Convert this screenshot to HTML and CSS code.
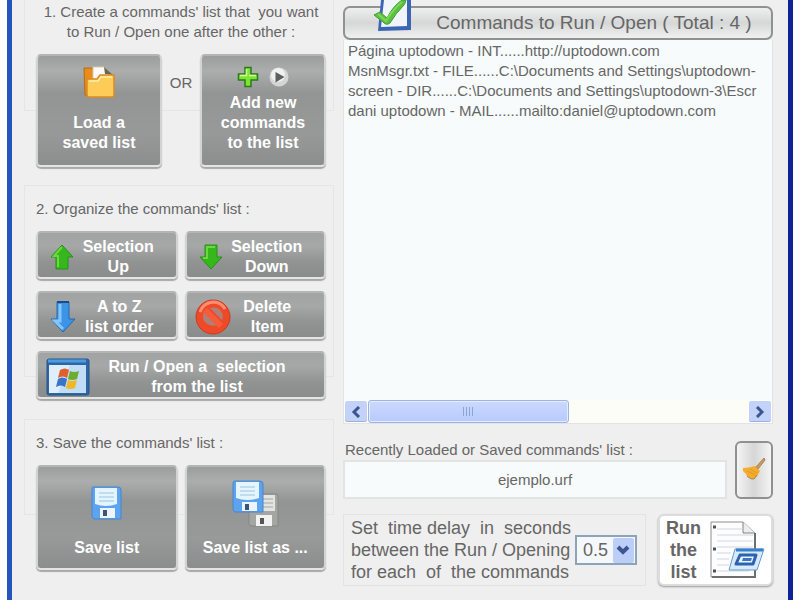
FILE: index.html
```html
<!DOCTYPE html>
<html lang="en">
<head>
  <meta charset="UTF-8">
  <meta name="viewport" content="width=device-width, initial-scale=1.0">
  <title>Commands to Run / Open</title>
  <link rel="stylesheet" href="styles.css">
</head>
<body>
  <div class="window">
    <div class="steps">
      <section class="group group-create">
        <p class="two-lines">1. Create a commands' list that&nbsp; you want<br>to Run / Open one after the other :</p>
        <div class="create-row">
          <button class="btn btn-load" type="button">
            <svg width="34" height="32" viewBox="0 0 34 32">
              <path d="M2 2h8l2 3v24H3z" fill="#e88c1c" stroke="#b86a10"/>
              <path d="M11 1h11l8 8v14H11z" fill="#fafafa" stroke="#d8c8a8"/>
              <path d="M22 1l1 7 8 1z" fill="#6c6552"/>
              <path d="M5 13h10l3-4h14v20q0 2-2 2H7q-2 0-2-2z" fill="#fdcb58" stroke="#dc8a1e" stroke-width="1.5"/>
              <path d="M7 15h9l3-4h11" fill="none" stroke="#fff0a8" stroke-width="1.5"/>
            </svg>
            <span>Load a<br>saved list</span>
          </button>
          <span class="or">OR</span>
          <button class="btn btn-add" type="button">
            <span class="icon-pair">
              <svg width="22" height="22" viewBox="0 0 22 22">
                <path d="M8 1.500h6v6.500h6.500v6H14v6.500H8V14H1.500V8H8z" fill="#7ce432" stroke="#2b7a1c" stroke-width="1.500"/>
                <path d="M9.500 3v6.500H3M12 9.500h7" fill="none" stroke="#d6ff9c" stroke-width="1.500"/>
              </svg>
              <svg width="20" height="20" viewBox="0 0 20 20">
                <circle cx="10" cy="10" r="9.500" fill="#d4d6d6"/>
                <circle cx="9" cy="8" r="7" fill="#f0f1f1"/>
                <path d="M6.500 5l9 5-9 5.500z" fill="#5c6060"/>
              </svg>
            </span>
            <span>Add new<br>commands<br>to the list</span>
          </button>
        </div>
      </section>

      <section class="group group-organize">
        <p>2. Organize the commands' list :</p>
        <div class="organize-grid">
          <button class="btn btn-row" type="button">
            <svg width="24" height="26" viewBox="0 0 24 26">
              <path d="M12 1l11 12h-5v12H6V13H1z" fill="#36b81c" stroke="#288f1c"/>
              <path d="M12 3L4 12h4v11" fill="none" stroke="#6cd840" stroke-width="2"/>
            </svg>
            <span>Selection<br>Up</span>
          </button>
          <button class="btn btn-row" type="button">
            <svg width="24" height="26" viewBox="0 0 24 26">
              <path d="M12 25L1 13h5V1h12v12h5z" fill="#36b81c" stroke="#288f1c"/>
              <path d="M16 3H8v11H4" fill="none" stroke="#6cd840" stroke-width="2"/>
            </svg>
            <span>Selection<br>Down</span>
          </button>
          <button class="btn btn-row" type="button">
            <svg width="26" height="34" viewBox="0 0 26 34">
              <path d="M13 32L1 19h6V2h12v17h6z" fill="#3c94e6" stroke="#2368b4"/>
              <path d="M10 4v17H5l8 8" fill="none" stroke="#84c6fa" stroke-width="3"/>
              <path d="M7 2h12" stroke="#1a4a8c" stroke-width="2"/>
            </svg>
            <span>A to Z<br>list order</span>
          </button>
          <button class="btn btn-row btn-delete" type="button">
            <svg width="36" height="36" viewBox="0 0 36 36">
              <circle cx="18" cy="18" r="17" fill="#ee4a28" stroke="#c83c20"/>
              <path d="M5 13Q8 4 18 3q8 0 12 7" fill="none" stroke="#ff8c70" stroke-width="3"/>
              <path d="M15 9q7-2 11 3 3 5 1 9zM9 13q-3 7 2 11 5 4 11 2z" fill="#b08078"/>
              <path d="M10 11l16 16" stroke="#f45c3c" stroke-width="6"/>
            </svg>
            <span>Delete<br>Item</span>
          </button>
          <button class="btn btn-row btn-run-selection" type="button">
            <svg width="44" height="38" viewBox="0 0 44 38">
              <rect x="1" y="1" width="42" height="36" rx="2" fill="#2c66a8" stroke="#255488"/>
              <path d="M2 3h38" stroke="#4c9ce0" stroke-width="3"/>
              <path d="M3 7h37v28H3z" fill="#e0edfa"/>
              <path d="M24 7h16v28H12z" fill="#c3dcf5"/>
              <path d="M14 12q5-3 9 0l-2 8q-4-3-9 0z" fill="#e0602c"/>
              <path d="M24 13q4 2 9 0l-2 8q-5 2-9 0z" fill="#6cac30"/>
              <path d="M12 21q4-3 9 0l-2 8q-4-3-9 0z" fill="#3874cc"/>
              <path d="M22 22q4 2 9 0l-2 8q-5 2-9 0z" fill="#f0b824"/>
            </svg>
            <span>Run / Open a&nbsp; selection<br>from the list</span>
          </button>
        </div>
      </section>

      <section class="group group-save">
        <p>3. Save the commands' list :</p>
        <div class="save-row">
          <button class="btn btn-save" type="button">
            <svg width="54" height="52" viewBox="0 0 54 52">
              <path d="M13 10h25q3 0 3 3v29H14l-2-2V12q0-2 1-2z" fill="#5ca4f0" stroke="#4884cc"/>
              <path d="M15 11h22v16q-11 4-22 0z" fill="#e4f5ff"/>
              <path d="M19 16h15M19 20h15M19 24h15" stroke="#9cc4e0"/>
              <path d="M20 31h15v10H20z" fill="#edf4ff"/>
              <path d="M23 33h4v6h-4z" fill="#3c5478"/>
            </svg>
            <span>Save list</span>
          </button>
          <button class="btn btn-save" type="button">
            <svg width="54" height="52" viewBox="0 0 54 52">
              <path d="M22 17h26q2 0 2 2v30H23l-2-2V18z" fill="#a4a6a4" stroke="#858785"/>
              <path d="M25 18h22v16H25z" fill="#e2e4e2"/>
              <path d="M34 22h11M34 26h11M34 30h11" stroke="#a4a6a4"/>
              <path d="M28 38h16v11H28z" fill="#f2f2f0"/>
              <path d="M32 41h4v6h-4z" fill="#555"/>
              <path d="M6 4h26q3 0 3 3v28H7l-2-2V6z" fill="#5ca4f0" stroke="#4884cc"/>
              <path d="M8 5h23v16q-12 4-23 0z" fill="#e4f5ff"/>
              <path d="M12 10h15M12 14h15M12 18h15" stroke="#9cc4e0"/>
              <path d="M14 25h15v9H14z" fill="#edf4ff"/>
              <path d="M17 27h4v6h-4z" fill="#3c5478"/>
            </svg>
            <span>Save list as ...</span>
          </button>
        </div>
      </section>
    </div>

    <div class="commands">
      <h1 class="commands-title">
        <svg class="title-icon" width="42" height="34" viewBox="0 0 42 34">
          <path d="M8 0L5 31l33-1V0z" fill="#3c66b4"/>
          <path d="M11 0L8 27l26-1V0z" fill="#f1f4fb"/>
          <path d="M1 15l6-3 7 6Q20 6 29 0h4q-1 4-2 5Q23 13 17 23q-4 3-7-1z" fill="#5cc040" stroke="#429c34"/>
          <path d="M5 14l8 7Q20 9 29 2" fill="none" stroke="#7cd858" stroke-width="2"/>
        </svg>
        <label for="commands-list">Commands to Run / Open ( Total : 4 )</label>
      </h1>
      <div class="list-box">
        <select class="list" id="commands-list" multiple size="6">
          <option>Página uptodown - INT......http://uptodown.com</option>
          <option>MsnMsgr.txt - FILE......C:\Documents and Settings\uptodown-</option>
          <option>screen - DIR......C:\Documents and Settings\uptodown-3\Escr</option>
          <option>dani uptodown - MAIL......mailto:daniel@uptodown.com</option>
        </select>
        <div class="scrollbar">
          <button class="scroll-btn" type="button" aria-label="Scroll left">
            <svg width="12" height="12" viewBox="0 0 12 12"><path d="M9 1L4 6l5 5" fill="none" stroke="#3c5490" stroke-width="3"/></svg>
          </button>
          <div class="track">
            <div class="thumb"><span class="grip"></span></div>
          </div>
          <button class="scroll-btn" type="button" aria-label="Scroll right">
            <svg width="12" height="12" viewBox="0 0 12 12"><path d="M3 1l5 5-5 5" fill="none" stroke="#3c5490" stroke-width="3"/></svg>
          </button>
        </div>
      </div>

      <div class="recent">
        <div class="recent-file">
          <label for="recent-name">Recently Loaded or Saved commands' list :</label>
          <input class="recent-name" type="text" id="recent-name" value="ejemplo.urf">
        </div>
        <button class="clear-btn" type="button" aria-label="Clear">
          <svg width="26" height="26" viewBox="0 0 26 26">
            <path d="M15 10L23 1l1 2-7 9z" fill="#c89c58" stroke="#a88458"/>
            <path d="M2 11q6 0 12-2l5 5q-2 5-6 8-6 0-8-5l-3-3z" fill="#f4ac2c"/>
            <path d="M6 14l8 4M9 12l7 4" stroke="#e09828"/>
            <path d="M6 19q4 4 7 3l3-4" fill="none" stroke="#a88458"/>
          </svg>
        </button>
      </div>

      <div class="run-row">
        <div class="delay">
          <label for="delay">Set&nbsp; time delay&nbsp; in&nbsp; seconds<br>between the Run / Opening<br>for each&nbsp; of&nbsp; the commands</label>
          <div class="delay-pick">
            <select id="delay">
              <option>0.5</option>
              <option>1</option>
              <option>2</option>
            </select>
            <svg class="delay-arrow" width="21" height="25" viewBox="0 0 21 25">
              <rect width="21" height="25" rx="2" fill="#bccdf8"/>
              <path d="M5 9l5 5 5-5" fill="none" stroke="#3c5490" stroke-width="4"/>
            </svg>
          </div>
        </div>
        <button class="run-btn" type="button">
          <span>Run<br>the<br>list</span>
          <svg width="56" height="60" viewBox="0 0 56 60">
            <path d="M2 2h32l12 11v44H2z" fill="#fdfdfd" stroke="#8c8e90"/>
            <path d="M34 2v11h12" fill="#eceeee" stroke="#808284"/>
            <path d="M46 13v44H3" fill="none" stroke="#6c6e70" stroke-width="2"/>
            <path d="M8 9h26M8 15h36M8 21h36M8 27h36M8 33h14M8 39h12M8 45h12M8 51h32" stroke="#cdd8e4"/>
            <path d="M4 7h3M4 29h3M4 51h3" stroke="#505254" stroke-width="3"/>
            <path d="M26 29h29l-7 21H20z" fill="#d8e9fa" stroke="#609cd4"/>
            <path d="M27 30h27" stroke="#3c80c8" stroke-width="3"/>
            <path d="M31 35h16l-3 9H27z" fill="#eaf4ff" stroke="#2c62b0" stroke-width="3" stroke-linejoin="round"/>
            <path d="M34 38h9l-1 3h-9z" fill="#3c74c0"/>
          </svg>
        </button>
      </div>
    </div>
  </div>
</body>
</html>
```

FILE: styles.css
```css
* {
  box-sizing: border-box;
}
body {
  margin: 0;
  background: #fff;
  color: #666;
  font-family: "Liberation Sans", Arial, sans-serif;
  font-size: 15px;
  line-height: 20px;
}
p, h1 {
  margin: 0;
}
svg {
  display: block;
  flex: none;
}
button, input, select {
  margin: 0;
  font: inherit;
  color: inherit;
}
button {
  cursor: pointer;
}

.window {
  display: grid;
  grid-template-columns: 310px minmax(0, 1fr);
  gap: 9px;
  min-height: 100vh;
  margin: 0 7px;
  padding: 0 15px 0 12px;
  background: #efefef;
  border: solid #2355bc;
  border-width: 0 5px;
  border-right-color: #0c2296;
}

/* Left side: the buttons hang below the frame of their group */
.group {
  padding: 13px 7px 0 11px;
  border: 1px solid #e3e6e4;
}
.group-create {
  padding-top: 2px;
  border-top: 0;
  margin-bottom: 74px;
}
.group-organize {
  margin-bottom: 42px;
}
.group p {
  margin-bottom: 12px;
}
.two-lines {
  text-align: center;
}
.create-row {
  display: grid;
  grid-template-columns: 126px 1fr 126px;
  margin-bottom: -57px;
}
.organize-grid {
  display: grid;
  grid-template-columns: 1fr 1fr;
  gap: 10px 7px;
  margin-bottom: -25px;
}
.save-row {
  display: grid;
  grid-template-columns: 1fr 1fr;
  gap: 7px;
  margin-bottom: -56px;
}
.or {
  padding-top: 19px;
  text-align: center;
}

.btn {
  display: flex;
  flex-direction: column;
  align-items: center;
  justify-content: space-between;
  padding: 10px 4px 12px;
  border: 2px solid #d2d3d3;
  border-top-color: #b4b6b6;
  border-bottom-color: #e4e4e4;
  border-radius: 5px;
  background: linear-gradient(#9c9e9e, #acaeae 14%, #939595 34%, #989a9a 70%, #8c8e8e);
  box-shadow: 0 2px 1px #a8a8a8;
  color: #fff;
  font-size: 16px;
  font-weight: bold;
  text-align: center;
}
.btn-load, .btn-add {
  height: 113px;
}
.btn-row {
  flex-direction: row;
  justify-content: flex-start;
  gap: 4px;
  height: 48px;
  padding: 3px 17px 0 12px;
  margin-bottom: 2px;
  background: linear-gradient(#a2a4a4, #a6a8a8 30%, #929494 65%, #8a8c8c);
}
.btn-row span {
  flex: 1;
}
.btn-delete {
  padding-left: 8px;
  padding-right: 24px;
}
.btn-run-selection {
  grid-column: span 2;
  padding: 3px 24px 0 8px;
}
.btn-save {
  height: 105px;
  padding-bottom: 10px;
}
.icon-pair {
  display: flex;
  align-items: center;
  gap: 10px;
}

/* Right side */
.commands-title {
  position: relative;
  height: 34px;
  margin-top: 6px;
  padding-left: 72px;
  border: 2px solid #909292;
  border-radius: 7px;
  background: linear-gradient(#eee, #d6d8d8 50%, #f0f0f0);
  font-size: 19px;
  font-weight: normal;
  line-height: 30px;
  text-align: center;
  white-space: nowrap;
}
.title-icon {
  position: absolute;
  top: -8px;
  left: 28px;
}
.list-box {
  background: #f7fbfb;
  border: solid #e2e4e4;
  border-width: 0 1px 1px;
}
.list {
  display: block;
  width: 100%;
  height: 360px;
  padding: 2px 0 0 2px;
  border: 0;
  outline: 0;
  background: transparent;
  overflow: hidden;
  appearance: none;
}
.list option {
  min-height: 20px;
  padding: 0 2px;
  line-height: 20px;
}
.scrollbar {
  display: flex;
  height: 23px;
  background: #fcfdf7;
}
.scroll-btn {
  display: flex;
  align-items: center;
  justify-content: center;
  width: 24px;
  padding: 0;
  border: 1px solid #fff;
  border-radius: 3px;
  background: #c3d2f8;
  box-shadow: inset 0 -1px #9cb0dc;
}
.track {
  flex: 1;
}
.thumb {
  display: flex;
  align-items: center;
  justify-content: center;
  width: 53%;
  height: 100%;
  border: 1px solid #9cb4e4;
  border-radius: 3px;
  background: linear-gradient(#ccd9ff, #b8cafc);
  box-shadow: inset 0 0 0 1px #e4ecff;
}
.grip {
  width: 11px;
  height: 9px;
  background: repeating-linear-gradient(90deg, #8ca4dc 0 1px, transparent 1px 3px);
}

.recent {
  display: flex;
  gap: 8px;
  margin-top: 17px;
}
.recent-file {
  flex: 1;
  line-height: 18px;
}
.recent-file label {
  padding-left: 2px;
}
.recent-name {
  display: block;
  width: 100%;
  height: 39px;
  margin-top: 1px;
  border: 2px solid #e2e4e4;
  background: #f7fbfb;
  text-align: center;
}
.clear-btn {
  display: flex;
  align-items: center;
  justify-content: center;
  width: 38px;
  padding: 0;
  border: 2px solid #909090;
  border-radius: 6px;
  background: linear-gradient(90deg, #f4f4f4, #d6d6d6 50%, #f4f4f4);
}

.run-row {
  display: flex;
  gap: 12px;
  margin-top: 15px;
}
.delay {
  display: flex;
  flex: 1;
  align-items: center;
  justify-content: space-between;
  padding: 2px 8px 2px 7px;
  border: 1px solid #e2e4e4;
  font-size: 18px;
  line-height: 22px;
  white-space: nowrap;
}
.delay-pick {
  position: relative;
}
.delay-pick select {
  display: block;
  width: 62px;
  height: 30px;
  padding: 0 0 0 6px;
  border: 2px solid #8ca4b8;
  border-radius: 0;
  background: #f4f8fa;
  appearance: none;
}
.delay-arrow {
  position: absolute;
  top: 3px;
  right: 3px;
  pointer-events: none;
}
.run-btn {
  display: flex;
  align-items: center;
  justify-content: space-between;
  width: 115px;
  padding: 0 6px;
  border: 2px solid #dcdcdc;
  border-radius: 6px;
  background: #fff;
  box-shadow: 0 1px 2px #999;
  font-size: 18px;
  font-weight: bold;
  line-height: 22px;
}
```
